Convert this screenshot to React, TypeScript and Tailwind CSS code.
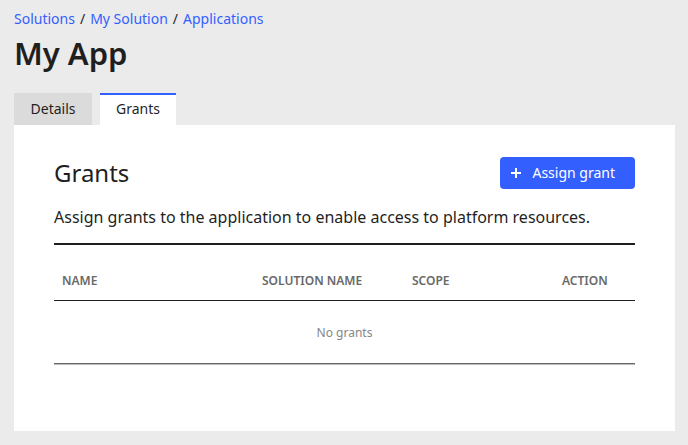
function Breadcrumbs() {
  return (
    <nav className="flex gap-[5px] text-sm leading-5">
      <a href="#solutions" className="text-[#335fff]">
        Solutions
      </a>
      <span>/</span>
      <a href="#my-solution" className="text-[#335fff]">
        My Solution
      </a>
      <span>/</span>
      <a href="#applications" className="text-[#335fff]">
        Applications
      </a>
    </nav>
  );
}

function Tabs() {
  return (
    <div className="flex gap-2 text-sm leading-5" role="tablist">
      <button
        role="tab"
        aria-selected="false"
        className="h-8 min-w-[78px] border-t-2 border-[#dbdbdb] bg-[#dbdbdb] px-4 pb-0.5"
      >
        Details
      </button>
      <button
        role="tab"
        aria-selected="true"
        className="h-8 border-t-2 border-[#335fff] bg-white px-4 pb-0.5"
      >
        Grants
      </button>
    </div>
  );
}

function GrantsTable() {
  return (
    <div className="border-b border-[#bbbbbb]">
      <table className="w-full table-fixed border-t-2 border-b border-t-[#1f1f1f] border-b-[#696969] text-xs">
        <thead>
          <tr className="h-14 border-b border-[#1f1f1f] text-left text-[#696969]">
            <th className="w-[200px] px-2 pt-[18px] font-semibold">NAME</th>
            <th className="w-[150px] px-2 pt-[18px] font-semibold">
              SOLUTION NAME
            </th>
            <th className="w-[150px] px-2 pt-[18px] font-semibold">SCOPE</th>
            <th className="px-2 pt-[18px] font-semibold">ACTION</th>
          </tr>
        </thead>
        <tbody>
          <tr className="h-[63px]">
            <td colSpan={4} className="pt-0.5 text-center text-[#868686]">
              No grants
            </td>
          </tr>
        </tbody>
      </table>
    </div>
  );
}

function App() {
  return (
    <div className="min-h-screen bg-[#ebebeb] pt-[9px] pr-[13px] pb-3.5 pl-3.5 font-['Noto_Sans',sans-serif] text-[#1f1f1f]">
      <Breadcrumbs />
      <h1 className="mt-1 text-[31px] leading-10 font-semibold">My App</h1>
      <div className="mt-5">
        <Tabs />
      </div>
      <main className="bg-white px-10 pt-8 pb-[66px]">
        <div className="flex items-center justify-between">
          <h2 className="text-2xl leading-8">Grants</h2>
          <button className="flex h-8 items-center gap-2 rounded-sm bg-[#335fff] pr-5 pl-2 text-sm text-white">
            <svg viewBox="0 0 16 16" className="h-4 w-4" aria-hidden="true">
              <path d="M8 3v10M3 8h10" stroke="currentColor" strokeWidth="2" />
            </svg>
            Assign grant
          </button>
        </div>
        <p className="mt-4 mb-3.5 text-base leading-6">
          Assign grants to the application to enable access to platform
          resources.
        </p>
        <GrantsTable />
      </main>
    </div>
  );
}

export default App;
